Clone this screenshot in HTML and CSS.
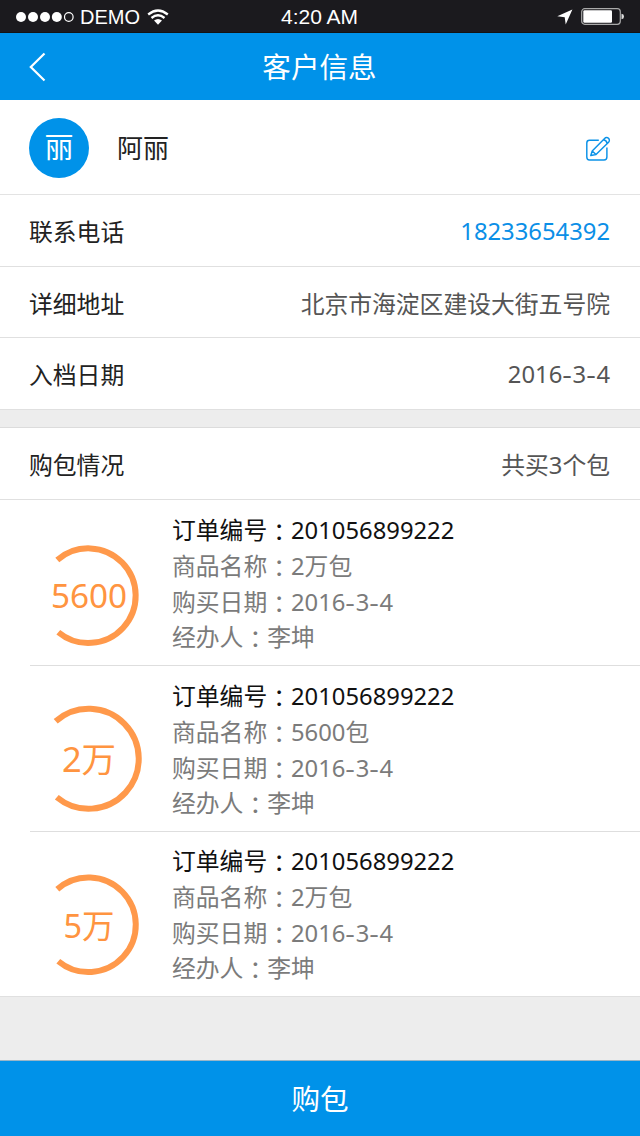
FILE: index.html
```html
<!DOCTYPE html>
<html lang="zh-CN">
<head>
<meta charset="utf-8">
<title>客户信息</title>
<link rel="stylesheet" href="styles.css">
</head>
<body>
<div class="app">
  <header class="status">
    <div class="status-left">
      <svg class="signal" width="60" height="12" viewBox="0 0 60 12">
        <g fill="#fff"><circle cx="6" cy="6" r="5"/><circle cx="18" cy="6" r="5"/><circle cx="30" cy="6" r="5"/><circle cx="41.8" cy="6" r="5"/></g>
        <circle cx="53.8" cy="6" r="4.3" fill="none" stroke="#fff" stroke-width="1.2"/>
      </svg>
      <span class="carrier">DEMO</span>
      <svg class="wifi" width="22" height="16" viewBox="0 0 22 16">
        <g fill="none" stroke="#fff" stroke-width="2.3"><path d="M1.2 5.5Q11 -2.4 20.8 5.5"/><path d="M4.5 9Q11 3.6 17.5 9"/></g>
        <path d="M7 11.6Q11 8.6 15 11.6L11 15.8Z" fill="#fff"/>
      </svg>
    </div>
    <span class="clock">4:20 AM</span>
    <div class="status-right">
      <svg width="16" height="16" viewBox="0 0 16 16"><path d="M15.4 .6L8.7 15.5L7.7 8.3L.3 7.2Z" fill="#fff"/></svg>
      <svg width="43" height="17" viewBox="0 0 43 17">
        <rect x=".7" y=".7" width="38.6" height="15.6" rx="3" fill="none" stroke="#aaa" stroke-width="1.2"/>
        <rect x="2.3" y="2.3" width="28.7" height="12.4" rx="1.2" fill="#fff"/>
        <path d="M40.5 5.7Q43 6 43 8.5T40.5 11.3Z" fill="#ddd"/>
      </svg>
    </div>
  </header>
  <nav class="nav">
    <svg class="back" width="18" height="30" viewBox="0 0 18 30"><path d="M16.5 1.5L2.8 15L16.5 28.5" fill="none" stroke="#fff" stroke-width="2.2"/></svg>
    <h1 class="title">客户信息</h1>
  </nav>
  <main>
    <section class="profile">
      <div class="avatar">丽</div>
      <span class="name">阿丽</span>
      <svg class="edit" width="26" height="26" viewBox="0 0 26 26" fill="none" stroke="#0b92e8" stroke-width="1.45" stroke-linejoin="round">
        <path d="M13.8 4.2H4.5Q1.8 4.2 1.8 6.9V21Q1.8 23.9 4.5 23.9H19Q21.9 23.9 21.9 21V11.5"/>
        <path d="M5.8 19.5L7.2 15L19.6 2.4A2.6 2.6 0 0 1 23.6 6.2L11 18.5ZM7.2 15L11 18.5M18.4 3.7Q21.5 4 22.2 7.5"/>
      </svg>
    </section>
    <dl class="rows">
      <div class="row"><dt>联系电话</dt><dd class="phone">18233654392</dd></div>
      <div class="row"><dt>详细地址</dt><dd class="address">北京市海淀区建设大街五号院</dd></div>
      <div class="row"><dt>入档日期</dt><dd>2016<i>-</i>3<i>-</i>4</dd></div>
    </dl>
    <div class="gap"></div>
    <div class="row summary"><span>购包情况</span><span class="count">共买3个包</span></div>
    <section class="orders">
      <article class="order">
        <svg class="ring" width="142" height="165" viewBox="0 0 142 165"><path d="M27.3 60A47.3 47.3 0 1 1 28.3 132.2"/><text x="59" y="107.5" font-size="33.3">5600</text></svg>
        <div class="details"><p class="number">订单编号<b lang="zh-TW">：</b>201056899222</p><p>商品名称<b lang="zh-TW">：</b>2万包</p><p>购买日期<b lang="zh-TW">：</b>2016<i>-</i>3<i>-</i>4</p><p>经办人<b lang="zh-TW">：</b>李坤</p></div>
      </article>
      <article class="order">
        <svg class="ring" width="142" height="165" viewBox="0 0 142 165"><path d="M25.7 55.2A50 50 0 1 1 26.8 131.2"/><text x="59" y="106" font-size="34.5">2万</text></svg>
        <div class="details"><p class="number">订单编号<b lang="zh-TW">：</b>201056899222</p><p>商品名称<b lang="zh-TW">：</b>5600包</p><p>购买日期<b lang="zh-TW">：</b>2016<i>-</i>3<i>-</i>4</p><p>经办人<b lang="zh-TW">：</b>李坤</p></div>
      </article>
      <article class="order">
        <svg class="ring" width="142" height="165" viewBox="0 0 142 165"><path d="M27.3 57.2A47.3 47.3 0 1 1 28.3 129.2"/><text x="59" y="106" font-size="32.5">5万</text></svg>
        <div class="details"><p class="number">订单编号<b lang="zh-TW">：</b>201056899222</p><p>商品名称<b lang="zh-TW">：</b>2万包</p><p>购买日期<b lang="zh-TW">：</b>2016<i>-</i>3<i>-</i>4</p><p>经办人<b lang="zh-TW">：</b>李坤</p></div>
      </article>
    </section>
  </main>
  <button class="buy">购包</button>
</div>
</body>
</html>
```

FILE: styles.css
```css
* { box-sizing: border-box; }
body, h1, p, dl, dd { margin: 0; }
body {
  font-family: "Noto Sans", "Noto Sans CJK SC", sans-serif;
  font-size: 23.8px;
  font-weight: 390;
  color: #222;
}
svg { display: block; flex: none; }
/* full-width colon centred in its cell */
b { display: inline-block; font-family: "Noto Sans CJK TC", sans-serif; font-weight: inherit; line-height: 1; transform: translateY(2px); }
/* wide hyphen used in dates */
i { display: inline-block; width: .43em; text-align: center; font-style: normal; line-height: 1; transform: scaleX(1.25); }
.app { width: 640px; height: 1136px; display: flex; flex-direction: column; background: #ededed; overflow: hidden; }
.status {
  height: 33px; flex: none; display: grid; grid-template-columns: 1fr auto 1fr; align-items: center;
  padding: 0 16px 0 15px; background: #1b1a1e; color: #fff; border-bottom: 1px solid #131313;
  font: 20px/32px "Liberation Sans", sans-serif;
}
.status-left, .status-right { display: flex; align-items: center; }
.carrier { margin: 1px 7px 0 5px; }
.clock { font-size: 21px; margin-top: 1px; }
.status-right { justify-content: flex-end; gap: 8px; }
.nav { height: 67px; flex: none; display: grid; grid-template-columns: 60px 1fr 60px; align-items: center; background: #0092e9; color: #fff; }
.back { margin-left: 28px; }
.title { font-size: 28.6px; font-weight: inherit; line-height: 40px; text-align: center; padding-right: 1px; }
.profile { height: 95px; display: flex; align-items: center; padding: 1px 29px 0 29px; background: #fff; border-bottom: 1px solid #e3e3e3; }
.avatar { width: 60px; height: 60px; border-radius: 50%; background: #0092e9; color: #fff; font-size: 29px; line-height: 58px; text-align: center; }
.name { flex: 1; margin-left: 28px; font-size: 26px; line-height: 40px; }
.edit { margin-top: 2px; }
.row { height: 72px; display: flex; align-items: center; justify-content: space-between; padding: 1px 30px 0 29px; line-height: 36px; background: #fff; border-bottom: 1px solid #e0e0e0; }
.row dt, .row .address { padding-top: 2px; }
.row:nth-child(2) { height: 71px; }
.row dd, .count { color: #555; }
.row .phone { color: #0b8fe7; }
.gap { height: 18px; border-bottom: 1px solid #dcdcdc; }
.row.summary { height: 72px; padding-top: 3px; }
.orders { background: #fff; border-bottom: 1px solid #e0e0e0; height: 497px; }
.order { height: 166px; display: flex; margin-left: 30px; border-bottom: 1px solid #dedede; }
.order:last-child { border: 0; height: 165px; }
.ring path { fill: none; stroke: #ff994b; stroke-width: 6; }
.ring text { fill: #ff9440; text-anchor: middle; }
.details { padding-top: 12px; color: #7b7b7b; line-height: 35.5px; }
.order:last-child .details { padding-top: 11px; }
.details .number { color: #111; line-height: 37px; }
.buy { margin-top: auto; height: 76px; flex: none; border: 0; border-top: 1px solid #9ab6c7; padding: 0 0 3px; background: #0092e9; color: #fff; font: inherit; font-size: 28.6px; }
```
